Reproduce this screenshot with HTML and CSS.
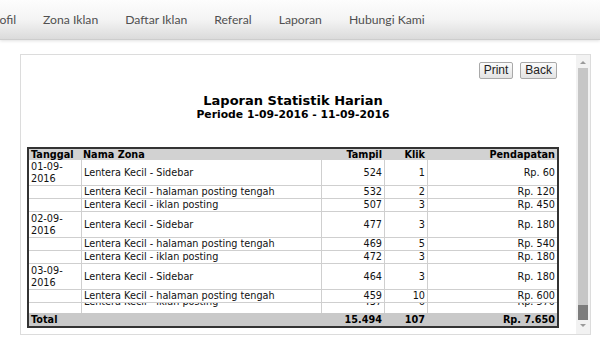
FILE: index.html
```html
<!DOCTYPE html>
<html lang="id">
<head>
  <meta charset="UTF-8">
  <title>Laporan Statistik Harian</title>
  <link rel="stylesheet" href="styles.css">
</head>
<body>

  <nav class="topnav">
    <ul class="menu">
      <li>Profil</li>
      <li>Zona Iklan</li>
      <li>Daftar Iklan</li>
      <li>Referal</li>
      <li>Laporan</li>
      <li>Hubungi Kami</li>
    </ul>
  </nav>

  <div class="frame">
    <div class="frame-body">
      <div class="report">
        <div class="actions">
          <button>Print</button>
          <button>Back</button>
        </div>
        <h2 class="report-title">Laporan Statistik Harian</h2>
        <h3 class="report-period">Periode 1-09-2016 - 11-09-2016</h3>

        <table class="stats">
          <thead>
            <tr>
              <th class="c-date">Tanggal</th>
              <th class="c-zone">Nama Zona</th>
              <th class="c-view num">Tampil</th>
              <th class="c-click num">Klik</th>
              <th class="c-pay num">Pendapatan</th>
            </tr>
          </thead>
          <tbody>
            <tr class="day">
              <td>01-09-<br>2016</td>
              <td>Lentera Kecil - Sidebar</td>
              <td class="num">524</td>
              <td class="num">1</td>
              <td class="num">Rp. 60</td>
            </tr>
            <tr>
              <td></td>
              <td>Lentera Kecil - halaman posting tengah</td>
              <td class="num">532</td>
              <td class="num">2</td>
              <td class="num">Rp. 120</td>
            </tr>
            <tr>
              <td></td>
              <td>Lentera Kecil - iklan posting</td>
              <td class="num">507</td>
              <td class="num">3</td>
              <td class="num">Rp. 450</td>
            </tr>
            <tr class="day">
              <td>02-09-<br>2016</td>
              <td>Lentera Kecil - Sidebar</td>
              <td class="num">477</td>
              <td class="num">3</td>
              <td class="num">Rp. 180</td>
            </tr>
            <tr>
              <td></td>
              <td>Lentera Kecil - halaman posting tengah</td>
              <td class="num">469</td>
              <td class="num">5</td>
              <td class="num">Rp. 540</td>
            </tr>
            <tr>
              <td></td>
              <td>Lentera Kecil - iklan posting</td>
              <td class="num">472</td>
              <td class="num">3</td>
              <td class="num">Rp. 180</td>
            </tr>
            <tr class="day">
              <td>03-09-<br>2016</td>
              <td>Lentera Kecil - Sidebar</td>
              <td class="num">464</td>
              <td class="num">3</td>
              <td class="num">Rp. 180</td>
            </tr>
            <tr>
              <td></td>
              <td>Lentera Kecil - halaman posting tengah</td>
              <td class="num">459</td>
              <td class="num">10</td>
              <td class="num">Rp. 600</td>
            </tr>
            <tr class="clipped">
              <td><div class="cut"></div></td>
              <td><div class="cut"><span>Lentera Kecil - iklan posting</span></div></td>
              <td class="num"><div class="cut"><span>437</span></div></td>
              <td class="num"><div class="cut"><span>6</span></div></td>
              <td class="num"><div class="cut"><span>Rp. 570</span></div></td>
            </tr>
          </tbody>
          <tfoot>
            <tr>
              <td colspan="2">Total</td>
              <td class="num">15.494</td>
              <td class="num">107</td>
              <td class="num">Rp. 7.650</td>
            </tr>
          </tfoot>
        </table>
      </div>
    </div>

    <div class="scrollbar">
      <span class="arrow up"></span>
      <div class="track"><div class="thumb"></div></div>
      <span class="arrow down"></span>
    </div>
  </div>

</body>
</html>
```

FILE: styles.css
```css
body {
  margin: 0;
  background: #fff;
  color: #000;
  font-family: "DejaVu Sans", Verdana, sans-serif;
}
.topnav {
  height: 39px;
  overflow: hidden;
  background: linear-gradient(#fdfdfd, #f4f4f4 50%, #dbdbdb);
  border-bottom: 1px solid #cdcdcd;
  box-shadow: 0 1px 3px rgba(0, 0, 0, 0.12);
}
.menu {
  list-style: none;
  margin: 0 0 0 -12px;
  padding: 0;
  display: flex;
  gap: 27px;
  font-family: Lato, "Open Sans", sans-serif;
  font-size: 12.2px;
  line-height: 39px;
  color: #505050;
  white-space: nowrap;
}
.frame {
  display: flex;
  height: 279px;
  margin: 14px 9px 0 20px;
  border: 1px solid #dcdcdc;
}
.frame-body {
  flex: 1;
  overflow: hidden;
  padding: 7px 0 0 6px;
}
.report {
  width: 532px;
}
.actions {
  display: flex;
  justify-content: flex-end;
  gap: 7px;
  padding-right: 2px;
}
.actions button {
  height: 17px;
  padding: 0 4px;
  font: 12px/15px "Liberation Sans", Arial, sans-serif;
  color: #222;
  background: linear-gradient(#fbfbfb, #e3e3e3);
  border: 1px solid #a9a9a9;
  border-radius: 2px;
}
.report-title {
  margin: 14px 0 0;
  text-align: center;
  font-size: 13px;
  line-height: 15px;
  font-weight: bold;
}
.report-period {
  margin: 0 0 26px;
  text-align: center;
  font-size: 10.8px;
  line-height: 13px;
  font-weight: bold;
}
.stats {
  width: 532px;
  box-sizing: border-box;
  table-layout: fixed;
  border-collapse: separate;
  border-spacing: 0;
  border: 2px solid #333;
  font-size: 9.7px;
  line-height: 12px;
  color: #111;
}
.stats th, .stats td {
  box-sizing: border-box;
  padding: 0 2px;
  text-align: left;
  white-space: nowrap;
}
.stats .num {
  text-align: right;
}
.stats th {
  background: #d2d2d2;
  line-height: 11px;
  color: #000;
}
.c-date { width: 52px; }
.c-zone { width: 240px; }
.c-view { width: 63px; }
.c-click { width: 43px; }
.c-pay { width: 130px; }
.stats tbody td {
  border-bottom: 1px solid #cfcfcf;
}
.stats tbody td + td {
  border-left: 1px solid #cfcfcf;
}
.stats tr.day td {
  height: 26px;
}
.stats tr.clipped td {
  border-bottom: none;
  height: 10px;
}
.cut {
  height: 10px;
  overflow: hidden;
}
.cut span {
  display: block;
  margin-top: -7px;
}
.stats tfoot td {
  background: #c9c9c9;
  font-weight: bold;
  line-height: 13px;
  color: #000;
}
.scrollbar {
  width: 14px;
  padding: 4px 0;
  background: #f2f2f2;
  display: flex;
  flex-direction: column;
  align-items: center;
}
.arrow {
  width: 0;
  height: 0;
  border-left: 3px solid transparent;
  border-right: 3px solid transparent;
}
.arrow.up {
  margin: 2px 0 4px;
  border-bottom: 3px solid #9a9a9a;
}
.arrow.down {
  margin: 4px 0 3px;
  border-top: 3px solid #9a9a9a;
}
.track {
  flex: 1;
  width: 10px;
  background: #c6c6c6;
  display: flex;
  flex-direction: column;
  justify-content: flex-end;
}
.thumb {
  height: 15px;
  background: #7d7d7d;
}
```
